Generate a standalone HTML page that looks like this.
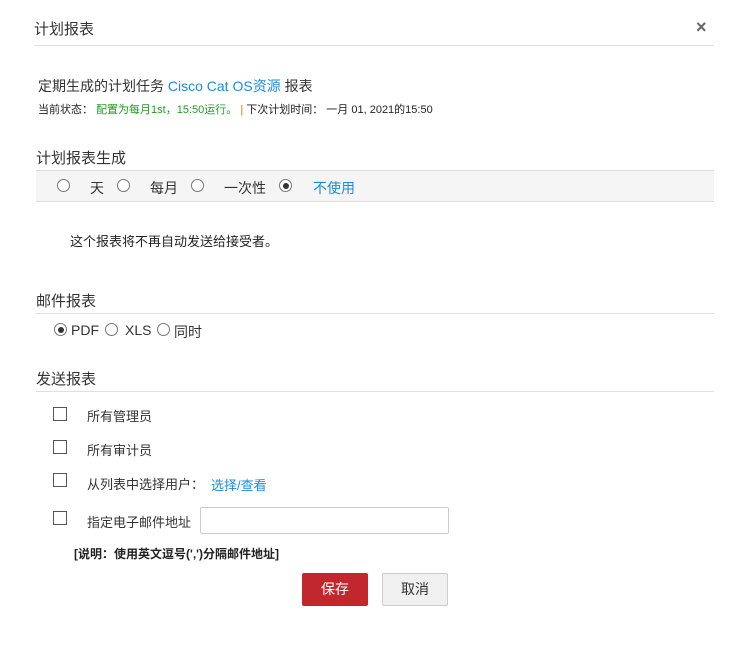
<!DOCTYPE html>
<html><head><meta charset="utf-8"><style>
body{margin:0;width:747px;height:647px;background:#fff;font-family:"Liberation Sans","Noto Sans CJK SC",sans-serif;color:#333;position:relative;overflow:hidden}
.a{position:absolute;white-space:nowrap}
.hr{position:absolute;height:1px;background:#e0e0e0}
.rad{position:absolute;width:11px;height:11px;border:1px solid #777;border-radius:50%;background:#fff}
.rad.on::after{content:"";position:absolute;left:2.5px;top:2.5px;width:6px;height:6px;border-radius:50%;background:#333}
.cb{position:absolute;width:12px;height:12px;border:1px solid #555;background:#fff}
.blue{color:#1a8ce0}
</style></head><body>
<div class="a" style="left:34px;top:18px;font-size:15px">计划报表</div>
<div class="a" style="left:696px;top:17px;font-size:18px;color:#666;font-weight:bold">×</div>
<div class="hr" style="left:34px;top:45px;width:680px"></div>
<div class="a" style="left:38px;top:76px;font-size:14px">定期生成的计划任务 <span class="blue">Cisco Cat OS资源</span> 报表</div>
<div class="a" style="left:38px;top:101px;font-size:11px;color:#222">当前状态： <span style="color:#1e9e1e">配置为每月1st，15:50运行。</span> <span style="color:#e07b00">|</span> 下次计划时间： 一月 01, 2021的15:50</div>
<div class="a" style="left:36px;top:147px;font-size:15px">计划报表生成</div>
<div style="position:absolute;left:36px;top:170px;width:678px;height:30px;background:#f5f5f5;border-top:1px solid #ddd;border-bottom:1px solid #ddd"></div>
<div class="rad" style="left:57px;top:179px"></div><div class="a" style="left:90px;top:178px;font-size:14px">天</div>
<div class="rad" style="left:117px;top:179px"></div><div class="a" style="left:150px;top:178px;font-size:14px">每月</div>
<div class="rad" style="left:191px;top:179px"></div><div class="a" style="left:224px;top:178px;font-size:14px">一次性</div>
<div class="rad on" style="left:279px;top:179px"></div><div class="a blue" style="left:313px;top:178px;font-size:14px">不使用</div>
<div class="a" style="left:70px;top:231px;font-size:13px;color:#222">这个报表将不再自动发送给接受者。</div>
<div class="a" style="left:36px;top:290px;font-size:15px">邮件报表</div>
<div class="hr" style="left:36px;top:313px;width:678px"></div>
<div class="rad on" style="left:54px;top:323px"></div><div class="a" style="left:71px;top:322px;font-size:14px">PDF</div>
<div class="rad" style="left:105px;top:323px"></div><div class="a" style="left:125px;top:322px;font-size:14px">XLS</div>
<div class="rad" style="left:157px;top:323px"></div><div class="a" style="left:174px;top:322px;font-size:14px">同时</div>
<div class="a" style="left:36px;top:368px;font-size:15px">发送报表</div>
<div class="hr" style="left:36px;top:391px;width:678px"></div>
<div class="cb" style="left:53px;top:407px"></div><div class="a" style="left:87px;top:406px;font-size:13px">所有管理员</div>
<div class="cb" style="left:53px;top:440px"></div><div class="a" style="left:87px;top:440px;font-size:13px">所有审计员</div>
<div class="cb" style="left:53px;top:473px"></div><div class="a" style="left:87px;top:474px;font-size:13px">从列表中选择用户：</div>
<div class="a blue" style="left:211px;top:475px;font-size:13px">选择/查看</div>
<div class="cb" style="left:53px;top:511px"></div><div class="a" style="left:87px;top:512px;font-size:13px">指定电子邮件地址</div>
<div style="position:absolute;left:200px;top:507px;width:247px;height:25px;border:1px solid #ccc;border-radius:2px"></div>
<div class="a" style="left:74px;top:545px;font-size:12px;color:#222;font-weight:bold">[说明：使用英文逗号(',')分隔邮件地址]</div>
<div style="position:absolute;left:302px;top:573px;width:66px;height:33px;background:#c1272d;border-radius:2px;color:#fff;font-size:14px;text-align:center;line-height:33px">保存</div>
<div style="position:absolute;left:382px;top:573px;width:64px;height:31px;background:#f0f0f0;border:1px solid #ccc;border-radius:2px;font-size:14px;text-align:center;line-height:31px">取消</div>
</body></html>
